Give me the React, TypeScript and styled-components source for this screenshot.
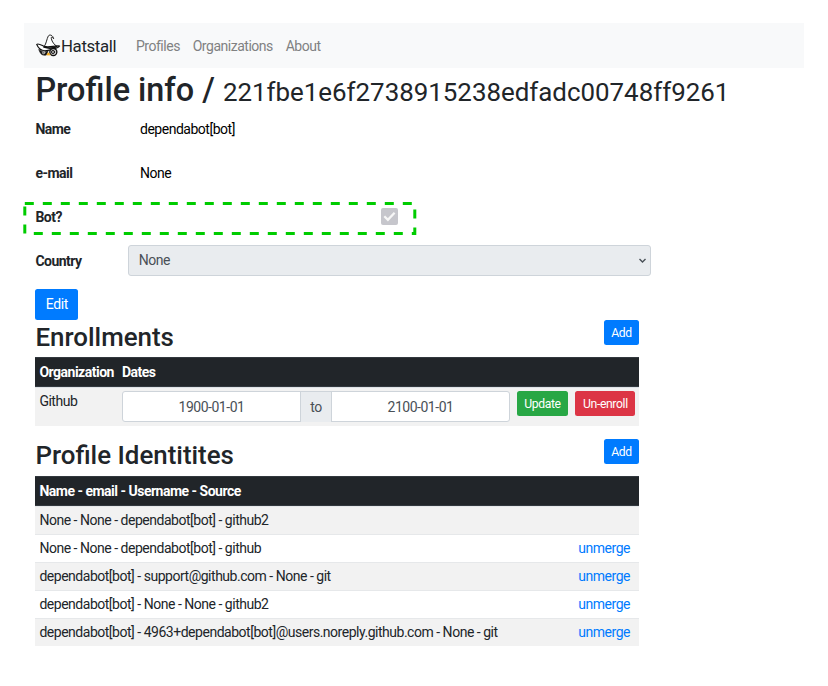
import React from "react";
import styled, { createGlobalStyle } from "styled-components";

const Global = createGlobalStyle`
  * { box-sizing: border-box; }
  body {
    margin: 0;
    background: #fff;
    color: #212529;
    font: 400 14px/19.5px Roboto, "Liberation Sans", sans-serif;
    letter-spacing: -0.48px;
  }
  h1, h2 { margin: 0; font-weight: 500; letter-spacing: 0; }
`;

const Page = styled.main`
  position: relative;
  width: 828px;
  height: 686px;
  padding: 23px 24px 0;
  overflow: hidden;
`;

const Navbar = styled.nav`
  display: flex;
  align-items: center;
  height: 45px;
  padding: 2px 0 0 11px;
  background: #f8f9fa;
`;

const Brand = styled.a`
  display: flex;
  align-items: center;
  width: 101px;
  font-size: 16.8px;
  letter-spacing: -0.35px;
  color: #212529;
  svg { margin-top: -3px; }
`;

const NavLink = styled.a`
  margin-right: 12.8px;
  color: #808182;
`;

const Content = styled.div`
  padding-left: 11.4px;
`;

const Title = styled.h1`
  height: 43px;
  padding-top: 3px;
  font-size: 32.4px;
  line-height: 39px;
  white-space: nowrap;
  small { font-size: 25.9px; font-weight: 400; letter-spacing: -0.01px; }
`;

const Field = styled.div<{ $h?: number }>`
  display: flex;
  align-items: center;
  height: ${(p) => p.$h ?? 44}px;
`;

const Label = styled.label<{ $w: number }>`
  width: ${(p) => p.$w}px;
  padding-top: 1px;
  font-weight: 700;
  letter-spacing: -0.52px;
`;

const Value = styled.span`
  padding-top: 1px;
  color: #000;
`;

const Check = styled.span`
  display: grid;
  place-items: center;
  width: 17px;
  height: 17px;
  margin: -3px 0 0 241px;
  border-radius: 2px;
  background: #c6c6cc;
`;

const Select = styled.div`
  display: flex;
  align-items: center;
  justify-content: space-between;
  width: 523px;
  height: 31px;
  margin-top: -1px;
  padding: 1px 3px 0 10px;
  border: 1px solid #ced4da;
  border-radius: 3px;
  background: #e9ecef;
  color: #495057;
`;

const Button = styled.button<{ $color: string; $w: number; $large?: boolean }>`
  flex: none;
  width: ${(p) => p.$w}px;
  height: ${(p) => (p.$large ? 31 : 25)}px;
  padding: 0;
  border: 0;
  border-radius: 2.5px;
  background: ${(p) => p.$color};
  color: #fff;
  font: 400 ${(p) => (p.$large ? 14 : 12.2)}px Roboto, sans-serif;
  letter-spacing: -0.37px;
`;

const Section = styled.section`
  width: 603.6px;
`;

const SectionHead = styled.div<{ $gap?: number }>`
  display: flex;
  justify-content: space-between;
  height: 37px;
  margin-top: ${(p) => p.$gap ?? 0}px;
  h2 { font-size: 25.9px; line-height: ${(p) => (p.$gap ? 33 : 35)}px; }
`;

const TableHead = styled.div`
  display: flex;
  align-items: center;
  height: 30px;
  padding: 1px 0 0 4px;
  border: 1px solid #32383e;
  border-width: 1px 0;
  background: #212529;
  color: #fff;
  font-weight: 700;
  letter-spacing: -0.5px;
  span:first-child:not(:last-child) { width: 82.5px; }
`;

const EnrollRow = styled.div`
  display: flex;
  height: 39px;
  padding: 3px 3px 0 4px;
  border-top: 1px solid #dee2e6;
  background: #f2f2f2;
`;

const Org = styled.span`
  width: 82.6px;
  padding-top: 1px;
`;

const Range = styled.div`
  display: grid;
  grid-template-columns: 177px 32px 177px;
  width: 388px;
  height: 31px;
  margin-right: 7px;
  border: 1px solid #ced4da;
  border-radius: 3px;
  background: #fff;
  color: #495057;
  text-align: center;
  line-height: 30px;
`;

const Joiner = styled.span`
  border: 1px solid #ced4da;
  border-width: 0 1px;
  background: #e9ecef;
`;

const Actions = styled.div`
  display: flex;
  gap: 7.4px;
`;

const IdentityRow = styled.div<{ $striped: boolean }>`
  display: flex;
  align-items: center;
  justify-content: space-between;
  height: 28px;
  padding: 0 9px 0 4px;
  border-top: 1px solid #e6e8ea;
  background: ${(p) => (p.$striped ? "#f2f2f2" : "#fff")};
  a { color: #007bff; }
`;

const EditSlot = styled.div`
  display: flex;
  padding-top: 2px;
`;

const Highlight = styled.svg`
  position: absolute;
  left: 23px;
  top: 202px;
`;

const HatLogo = () => (
  <svg width="26" height="24" viewBox="45 40 78 72" fill="none" stroke="#111" strokeLinecap="round" strokeLinejoin="round">
    <path d="M72 82C80 70 80 58 85 49C89 43 99 47 101 57C96 52 93 50 94 57C96 67 103 75 110 80" fill="#fff" strokeWidth="2.8" />
    <path d="M50 74C55 70 62 75 72 80C88 85 103 77 119 79C113 88 98 89 84 92C68 96 56 89 50 74Z" fill="#fff" strokeWidth="3.4" />
    <path d="M72 82Q91 89 110 81" strokeWidth="5" />
    <path d="M57 90Q68 100 84 94L79 106Q65 109 60 98Z" fill="#111" strokeWidth="2" />
    <circle cx="71" cy="99" r="4" fill="#777" stroke="#ddd" strokeWidth="1.5" />
    <circle cx="100" cy="97" r="10.5" fill="#ddd" strokeWidth="4" />
    <circle cx="99" cy="97" r="5" fill="#999" strokeWidth="2.5" />
    <path d="M81 105L85 99L90 105Z" fill="#f5a000" stroke="#f5a000" strokeWidth="2" />
  </svg>
);

const identities = [
  { text: "None - None - dependabot[bot] - github2", merged: false },
  { text: "None - None - dependabot[bot] - github", merged: true },
  { text: "dependabot[bot] - support@github.com - None - git", merged: true },
  { text: "dependabot[bot] - None - None - github2", merged: true },
  { text: "dependabot[bot] - 4963+dependabot[bot]@users.noreply.github.com - None - git", merged: true },
];

export default function App() {
  return (
    <Page>
      <Global />
      <Navbar>
        <Brand><HatLogo />Hatstall</Brand>
        <NavLink>Profiles</NavLink>
        <NavLink>Organizations</NavLink>
        <NavLink>About</NavLink>
      </Navbar>
      <Content>
        <Title>Profile info / <small>221fbe1e6f2738915238edfadc00748ff9261</small></Title>
        <Field $h={37}><Label $w={104.6}>Name</Label><Value>dependabot[bot]</Value></Field>
        <Field $h={51}><Label $w={104.6}>e-mail</Label><Value>None</Value></Field>
        <Field $h={37}>
          <Label $w={104.6}>Bot?</Label>
          <Check>
            <svg width="13" height="11" viewBox="0 0 13 11" fill="none" stroke="#f7f7f7" strokeWidth="2.3">
              <path d="M1.3 5.2L4.9 8.8L11.6 1.7" />
            </svg>
          </Check>
        </Field>
        <Field $h={50}>
          <Label $w={92.4}>Country</Label>
          <Select>
            <span>None</span>
            <svg width="9" height="6" viewBox="0 0 9 6" fill="none" stroke="#495057" strokeWidth="1.4">
              <path d="M1.5 1L4.5 4L7.5 1" />
            </svg>
          </Select>
        </Field>
        <Field $h={34}><EditSlot><Button $color="#007bff" $w={43} $large>Edit</Button></EditSlot></Field>
        <Section>
          <SectionHead>
            <h2>Enrollments</h2>
            <Button $color="#007bff" $w={35}>Add</Button>
          </SectionHead>
          <TableHead><span>Organization</span><span>Dates</span></TableHead>
          <EnrollRow>
            <Org>Github</Org>
            <Range><span>1900-01-01</span><Joiner>to</Joiner><span>2100-01-01</span></Range>
            <Actions>
              <Button $color="#28a745" $w={51}>Update</Button>
              <Button $color="#dc3545" $w={60}>Un-enroll</Button>
            </Actions>
          </EnrollRow>
        </Section>
        <Section>
          <SectionHead $gap={13}>
            <h2>Profile Identitites</h2>
            <Button $color="#007bff" $w={35}>Add</Button>
          </SectionHead>
          <TableHead><span>Name - email - Username - Source</span></TableHead>
          {identities.map((row, i) => (
            <IdentityRow key={row.text} $striped={i % 2 === 0}>
              <span>{row.text}</span>
              {row.merged && <a>unmerge</a>}
            </IdentityRow>
          ))}
        </Section>
      </Content>
      <Highlight width="394" height="34">
        <rect x="1.8" y="1.5" width="390" height="30" fill="none" stroke="#00cc00" strokeWidth="3" strokeDasharray="9 9" />
      </Highlight>
    </Page>
  );
}
